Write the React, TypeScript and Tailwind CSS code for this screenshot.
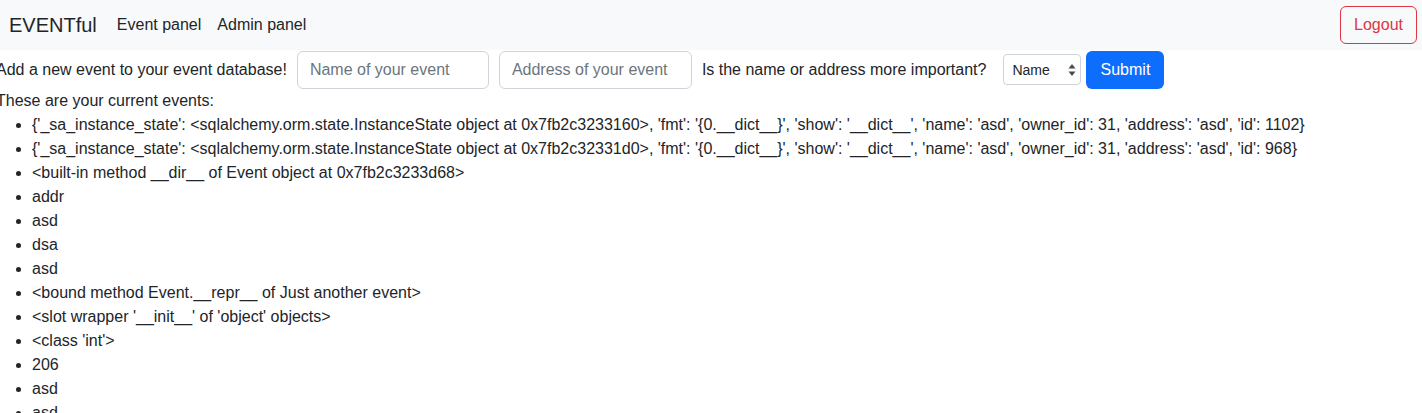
import React from "react";

const items = [
  "{'_sa_instance_state': <sqlalchemy.orm.state.InstanceState object at 0x7fb2c3233160>, 'fmt': '{0.__dict__}', 'show': '__dict__', 'name': 'asd', 'owner_id': 31, 'address': 'asd', 'id': 1102}",
  "{'_sa_instance_state': <sqlalchemy.orm.state.InstanceState object at 0x7fb2c32331d0>, 'fmt': '{0.__dict__}', 'show': '__dict__', 'name': 'asd', 'owner_id': 31, 'address': 'asd', 'id': 968}",
  "<built-in method __dir__ of Event object at 0x7fb2c3233d68>",
  "addr",
  "asd",
  "dsa",
  "asd",
  "<bound method Event.__repr__ of Just another event>",
  "<slot wrapper '__init__' of 'object' objects>",
  "<class 'int'>",
  "206",
  "asd",
  "asd",
  "asd",
];

export default function App() {
  return (
    <div className="h-[413px] overflow-hidden bg-white text-[16px] leading-[24px] text-[#212529]" style={{ fontFamily: "'Liberation Sans', Arial, sans-serif" }}>
      <nav className="h-[50px] bg-[#f8f9fa] flex items-center pl-[9px] pr-[5px]">
        <span className="text-[20px] leading-[30px] mr-[20px] -mt-[1px]">EVENTful</span>
        <a className="mr-[16px] -mt-[1px]">Event panel</a>
        <a className="-mt-[1px]">Admin panel</a>
        <button className="ml-auto h-[38px] px-[13px] border border-[#dc3545] rounded-[6px] text-[#dc3545]">Logout</button>
      </nav>
      <form className="flex items-center -ml-[4px] h-[39px]">
        <span className="mr-[10px]">Add a new event to your event database!</span>
        <input className="w-[192px] h-[38px] border border-[#ced4da] rounded-[6px] px-[12px] mr-[10px] placeholder:text-[#6c757d] outline-none" placeholder="Name of your event" />
        <input className="w-[193px] h-[38px] border border-[#ced4da] rounded-[6px] px-[12px] mr-[10px] placeholder:text-[#6c757d] outline-none" placeholder="Address of your event" />
        <span className="mr-[17px]">Is the name or address more important?</span>
        <div className="relative w-[78px] h-[31px] border border-[#ced4da] rounded-[4px] mr-[5px] flex items-center pl-[8px] text-[14px]">
          Name
          <svg className="absolute right-[4px] top-[9px]" width="8" height="12" viewBox="0 0 8 12">
            <path d="M4 0 L7.5 4.5 H0.5 Z" fill="#4a4a4a" />
            <path d="M4 12 L7.5 7.5 H0.5 Z" fill="#4a4a4a" />
          </svg>
        </div>
        <button type="button" className="h-[38px] w-[78px] bg-[#0d6efd] text-white rounded-[6px]">Submit</button>
      </form>
      <div className="-ml-[4px]">These are your current events:</div>
      <ul className="list-disc pl-[32px]">
        {items.map((t, i) => (
          <li key={i}>{t}</li>
        ))}
      </ul>
    </div>
  );
}
